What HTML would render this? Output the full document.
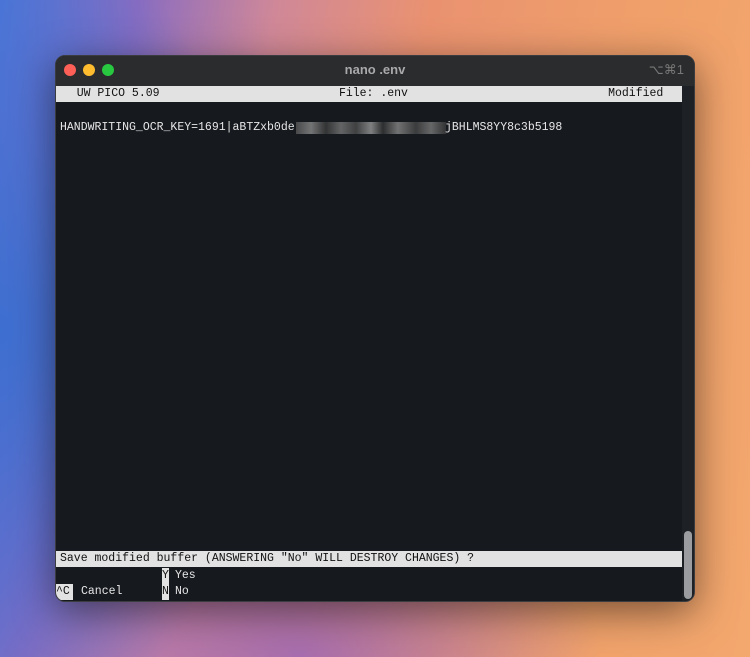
<!DOCTYPE html>
<html><head><style>
html,body{margin:0;width:750px;height:657px;overflow:hidden}
body{position:relative;background:
radial-gradient(ellipse 260px 420px at 0px 330px,#3d6fd0 0%,rgba(70,110,210,0.6) 50%,rgba(0,0,0,0) 100%),
radial-gradient(ellipse 300px 200px at 300px 657px,rgba(150,100,190,0.8) 0%,rgba(0,0,0,0) 100%),
linear-gradient(100deg,#4a78d8 0%,#8a6cc0 16%,#d08898 32%,#ea9270 50%,#f0a06a 75%,#f3a86e 100%);}
.win{position:absolute;left:55px;top:55px;width:640px;height:547px;background:#16191e;border-radius:10px;overflow:hidden;box-shadow:0 10px 40px rgba(0,0,0,.5);border:1px solid #3a3c40;box-sizing:border-box}
.title{position:absolute;left:0;top:0;width:100%;height:30px;background:#2b2c2e;color:#a9a9ab;font:bold 13px "Liberation Sans",sans-serif;text-align:center;line-height:27px}
.dot{position:absolute;top:8px;width:12px;height:12px;border-radius:50%}
.mono{font-family:"Liberation Mono",monospace;font-size:11.5px;white-space:pre;position:absolute}
.bar{position:absolute;left:0;width:626px;height:16px;background:#e2e2e2;color:#111;line-height:16px}
.fg{color:#e6e6e6}
</style></head><body>
<div class="win">
 <div class="title">nano .env<span style="position:absolute;right:10px;top:0;font-weight:normal;color:#777">⌥⌘1</span></div>
 <div class="dot" style="left:8px;background:#fe5f57"></div>
 <div class="dot" style="left:27px;background:#febc2e"></div>
 <div class="dot" style="left:46px;background:#28c840"></div>
 <div class="bar mono" style="top:30px">   UW PICO 5.09                          File: .env                             Modified</div>
 <div class="mono fg" style="left:4px;top:65px">HANDWRITING_OCR_KEY=1691|aBTZxb0de</div>
 <div style="position:absolute;left:240px;top:66px;width:150px;height:12px;background:linear-gradient(90deg,#555 0,#8a8a8a 10%,#3a3a3a 20%,#777 30%,#4a4a4a 40%,#999 50%,#333 58%,#888 68%,#444 80%,#7a7a7a 90%,#3a3a3a 100%);opacity:.8"></div>
 <div class="mono fg" style="left:389px;top:65px">jBHLMS8YY8c3b5198</div>
 <div class="bar mono" style="top:495px;width:426px;padding-left:4px">Save modified buffer (ANSWERING "No" WILL DESTROY CHANGES) ?</div>
 <div style="position:absolute;left:430px;top:495px;width:196px;height:16px;background:#e2e2e2"></div>
 <div class="mono" style="left:106px;top:512px;width:7px;height:16px;background:#e2e2e2;color:#111;line-height:16px">Y</div>
 <div class="mono fg" style="left:119px;top:512px;line-height:16px">Yes</div>
 <div class="mono" style="left:0;top:528px;width:17px;height:16px;background:#e2e2e2;color:#111;line-height:16px">^C</div>
 <div class="mono fg" style="left:25px;top:528px;line-height:16px">Cancel</div>
 <div class="mono" style="left:106px;top:528px;width:7px;height:16px;background:#e2e2e2;color:#111;line-height:16px">N</div>
 <div class="mono fg" style="left:119px;top:528px;line-height:16px">No</div>
 <div style="position:absolute;left:626px;top:30px;width:14px;height:517px;background:#1d2024"></div>
 <div style="position:absolute;left:628px;top:475px;width:8px;height:68px;background:#9a9c9f;border-radius:4px"></div>
</div>
</body></html>
